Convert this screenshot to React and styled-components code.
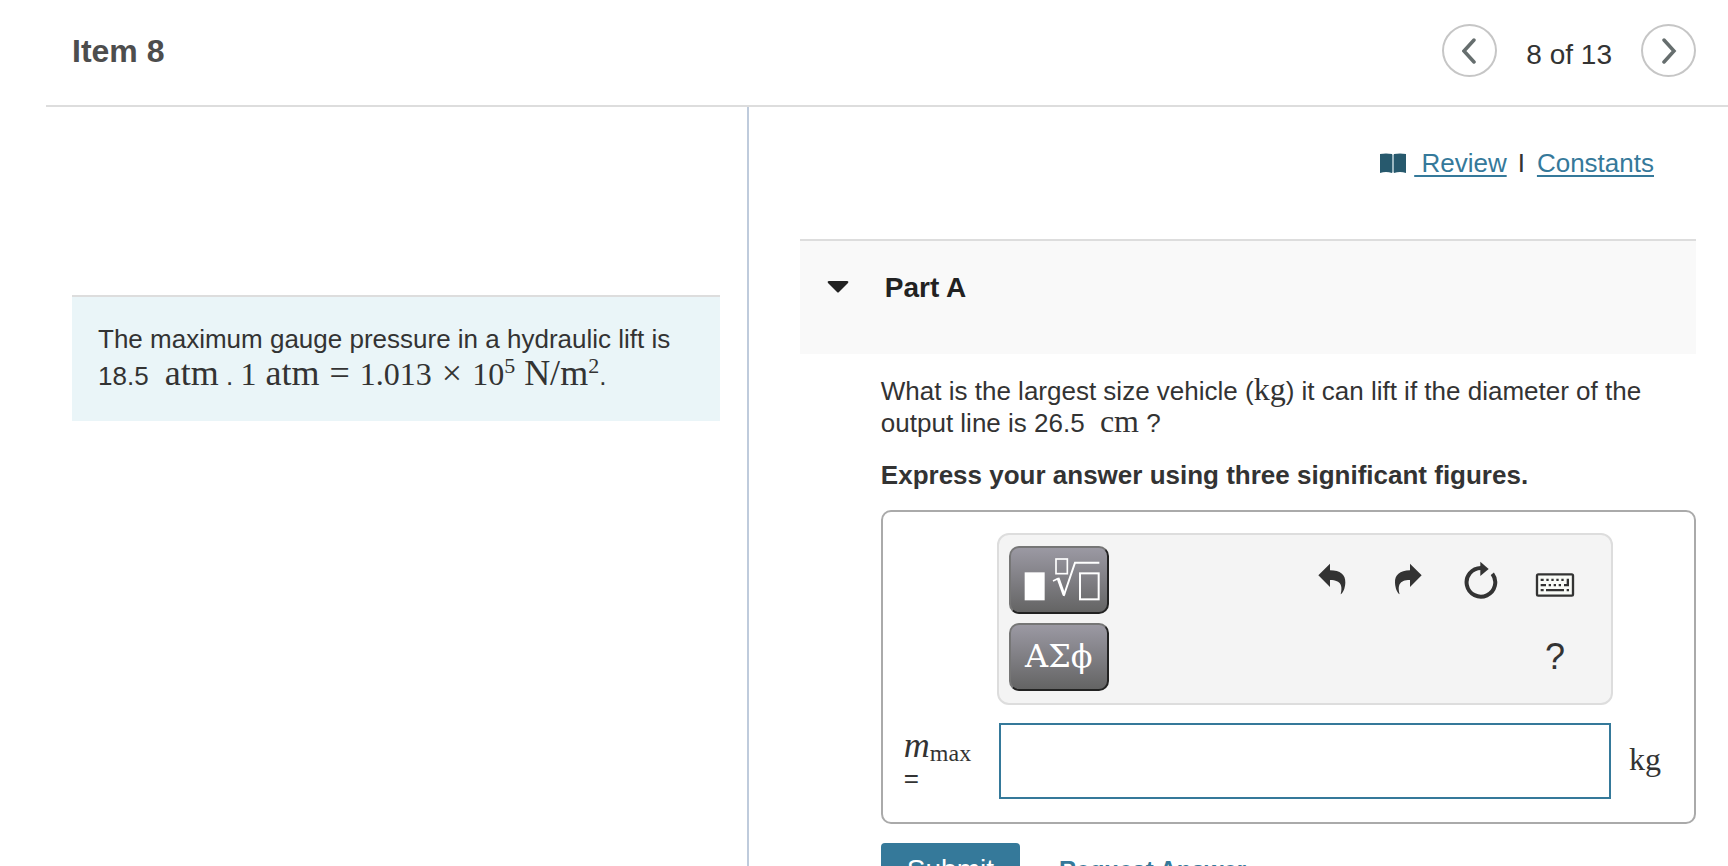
import React, { useState } from 'react';
import styled, { createGlobalStyle, ThemeProvider } from 'styled-components';

const theme = {
  colors: {
    text: '#333333',
    heading: '#4d4d4d',
    link: '#35799a',
    line: '#dddddd',
    divider: '#bfcbdc',
    intro: '#eaf5f8',
    panel: '#f9f9f9',
    toolbar: '#f4f4f4',
  },
  fonts: {
    body: '"Liberation Sans", Arial, sans-serif',
    math: '"Liberation Serif", "Times New Roman", serif',
  },
};

const GlobalStyle = createGlobalStyle`
  * {
    box-sizing: border-box;
  }
  body {
    margin: 0;
    background: #ffffff;
    color: ${({ theme }) => theme.colors.text};
    font-family: ${({ theme }) => theme.fonts.body};
    font-size: 26px;
    line-height: 32px;
  }
`;

const Page = styled.div`
  display: flex;
  flex-direction: column;
  height: 100vh;
  margin-left: 46px;
  overflow: hidden;
`;

const Header = styled.header`
  display: flex;
  justify-content: space-between;
  align-items: center;
  padding: 24px 32px 28px 26px;
  border-bottom: 2px solid ${({ theme }) => theme.colors.line};
`;

const Title = styled.h1`
  margin: 0;
  font-size: 32px;
  color: ${({ theme }) => theme.colors.heading};
`;

const Pager = styled.nav`
  display: flex;
  align-items: center;
  gap: 29px;
`;

const PagerText = styled.span`
  padding-top: 8px;
  font-size: 28px;
`;

const RoundButton = styled.button`
  display: flex;
  align-items: center;
  justify-content: center;
  width: 55px;
  height: 53px;
  padding: 0;
  border: 2px solid #c6c6c6;
  border-radius: 50%;
  background: #ffffff;
  color: #666e6e;
  cursor: pointer;
`;

const Columns = styled.div`
  display: grid;
  grid-template-columns: 5fr 7fr;
  flex: 1;
  min-height: 0;
`;

const IntroPane = styled.section`
  padding: 188px 27px 0 26px;
`;

const Intro = styled.div`
  padding: 24px 26px 26px;
  border-top: 2px solid ${({ theme }) => theme.colors.line};
  background: ${({ theme }) => theme.colors.intro};
  line-height: 37px;
`;

const Math = styled.span`
  font-family: ${({ theme }) => theme.fonts.math};
  font-size: 32px;
  line-height: 24px;
  white-space: nowrap;

  sup,
  sub {
    line-height: 12px;
  }
  sup {
    font-size: 22px;
    vertical-align: 12px;
  }
  sub {
    font-size: 24px;
    vertical-align: -4px;
  }
`;

const Variable = styled.i`
  font-size: 36px;
`;

const Operator = styled.span`
  margin: 0 10px;
  font-size: 36px;
`;

const Unit = styled.span`
  margin-left: ${({ $wide }) => ($wide ? 9 : 8)}px;
  font-size: ${({ $wide }) => ($wide ? 36 : 32)}px;
`;

const WorkPane = styled.main`
  padding: 40px 32px 0 51px;
  border-left: 2px solid ${({ theme }) => theme.colors.divider};
`;

const Resources = styled.div`
  display: flex;
  justify-content: flex-end;
  align-items: center;
  padding-right: 42px;
  margin-bottom: 60px;
`;

const Link = styled.a`
  color: ${({ theme }) => theme.colors.link};
  text-decoration: underline;
  text-underline-offset: 3px;
  text-decoration-thickness: 2px;
`;

const BookIcon = styled.svg`
  margin-right: 8px;
`;

const Separator = styled.span`
  margin: 0 12px 0 11px;
`;

const PartHeader = styled.button`
  display: flex;
  align-items: flex-start;
  gap: 36px;
  width: 100%;
  height: 115px;
  padding: 31px 27px;
  border: 0;
  border-top: 2px solid ${({ theme }) => theme.colors.line};
  background: ${({ theme }) => theme.colors.panel};
  color: #222222;
  font: bold 28px/32px ${({ theme }) => theme.fonts.body};
  text-align: left;
  cursor: pointer;

  svg {
    margin-top: 8px;
  }
`;

const PartBody = styled.div`
  padding: 21px 0 0 81px;
`;

const Question = styled.p`
  margin: 0 0 20px;
`;

const Instruction = styled.p`
  margin: 0 0 19px;
  font-weight: bold;
`;

const AnswerBox = styled.div`
  display: grid;
  grid-template-columns: 93px 1fr 65px;
  row-gap: 18px;
  padding: 21px 16px 23px 21px;
  border: 2px solid #aaaaaa;
  border-radius: 10px;
`;

const Toolbar = styled.div`
  grid-column: 2;
  display: flex;
  justify-content: space-between;
  padding: 11px 19px 12px 10px;
  border: 2px solid #dddddd;
  border-radius: 12px;
  background: ${({ theme }) => theme.colors.toolbar};
`;

const Palettes = styled.div`
  display: grid;
  gap: 9px;
`;

const PaletteButton = styled.button`
  display: flex;
  align-items: center;
  justify-content: center;
  width: 100px;
  height: 68px;
  padding: 0 0 2px;
  border: 2px solid;
  border-color: #767676 #222222 #222222 #767676;
  border-radius: 10px;
  background: linear-gradient(#9b99a3, #646464);
  color: #ffffff;
  font-family: "DejaVu Serif", serif;
  font-size: 32px;
  cursor: pointer;
`;

const Tools = styled.div`
  display: grid;
  grid-template-columns: repeat(4, 74px);
  row-gap: 9px;
`;

const ToolButton = styled.button`
  display: flex;
  align-items: center;
  justify-content: center;
  height: 68px;
  padding: 0;
  border: 0;
  background: none;
  color: #333333;
  font-family: ${({ theme }) => theme.fonts.body};
  font-size: 36px;
  cursor: pointer;
`;

const HelpButton = styled(ToolButton)`
  grid-column: 4;
`;

const AnswerLabel = styled.label`
  grid-column: 1;
  display: flex;
  flex-direction: column;
  justify-content: center;
  gap: 3px;
  padding-top: 4px;
`;

const AnswerInput = styled.input`
  height: 76px;
  min-width: 0;
  margin: 0 2px;
  padding: 0 16px;
  border: 2px solid ${({ theme }) => theme.colors.link};
  background: #ffffff;
  color: inherit;
  font: inherit;
  outline: none;
`;

const AnswerUnit = styled.div`
  align-self: center;
  padding-left: 16px;
`;

const Actions = styled.div`
  display: flex;
  align-items: center;
  gap: 39px;
  margin-top: 19px;
`;

const SubmitButton = styled.button`
  padding: 11px 26px;
  border: 0;
  border-radius: 4px;
  background: ${({ theme }) => theme.colors.link};
  color: #ffffff;
  font: 28px/32px ${({ theme }) => theme.fonts.body};
  cursor: pointer;
`;

const RequestLink = styled.a`
  color: ${({ theme }) => theme.colors.link};
  font-size: 24px;
  font-weight: bold;
  text-decoration: none;
`;

const Chevron = ({ points }) => (
  <svg width="16" height="26" viewBox="0 0 16 26" fill="none" stroke="currentColor" strokeWidth="3.500" strokeLinecap="round">
    <polyline points={points} />
  </svg>
);

const Book = () => (
  <BookIcon width="26" height="20" viewBox="0 0 26 20" aria-hidden="true">
    <path d="M0 1Q6 0 12 1V20Q6 18 0 20Z" fill="#27596d" />
    <path d="M26 1Q20 0 14 1V20Q20 18 26 20Z" fill="#27596d" />
    <path d="M12 1L13 2L14 1V19L13 20L12 19Z" fill="#9db8c2" />
  </BookIcon>
);

const TemplateIcon = () => (
  <svg width="84" height="50" viewBox="471 192 252 150" fill="none" stroke="#fff">
    <rect x="494" y="247" width="60" height="84" fill="#fff" stroke="none" />
    <rect x="588" y="207" width="34" height="44" strokeWidth="5" />
    <path d="M579 273L596 265" strokeWidth="5" />
    <path d="M594 264L612 314" strokeWidth="9" />
    <path d="M611 318L645 218H718" strokeWidth="6" />
    <rect x="660" y="250" width="56" height="78" strokeWidth="6" />
  </svg>
);

const UndoIcon = () => (
  <svg width="30" height="36" viewBox="113 218 90 108" fill="currentColor">
    <path d="M114 258L149 223V243C180 243 196 256 195 280C194 298 188 310 181 315C187 292 184 272 149 272V293Z" />
  </svg>
);

const RedoIcon = () => (
  <svg width="30" height="36" viewBox="337 218 90 108" fill="currentColor">
    <path d="M426 258L391 223V243C360 243 345 258 346 280C347 298 353 310 360 315C354 290 357 272 391 272V293Z" />
  </svg>
);

const ResetIcon = () => (
  <svg width="34" height="38" viewBox="552 213 102 114">
    <path d="M637 251A43 43 0 1 1 603 234" fill="none" stroke="currentColor" strokeWidth="12" />
    <path d="M601 215L626 237L601 258Z" fill="currentColor" />
  </svg>
);

const KeyboardIcon = () => (
  <svg width="40" height="36" viewBox="765 216 120 108" fill="currentColor">
    <rect x="771" y="253" width="108" height="64" rx="4" fill="#f9fbf7" stroke="currentColor" strokeWidth="7" />
    <path d="M782 266h9v7h-9zM799 266h7v7h-7zM814 266h7v7h-7zM829 266h7v7h-7zM844 266h7v7h-7z" />
    <path d="M860 266h7v23h-15v-7h8zM782 282h16v7h-16zM806 282h7v7h-7zM821 282h7v7h-7zM836 282h7v7h-7z" />
    <path d="M782 297h9v7h-9zM798 297h54v7h-54zM860 297h7v7h-7z" />
  </svg>
);

const App = () => {
  const [answer, setAnswer] = useState('');
  const [isOpen, setIsOpen] = useState(true);

  return (
    <ThemeProvider theme={theme}>
      <GlobalStyle />
      <Page>
        <Header>
          <Title>Item 8</Title>
          <Pager>
            <RoundButton aria-label="Previous item"><Chevron points="12,2 2,13 12,24" /></RoundButton>
            <PagerText>8 of 13</PagerText>
            <RoundButton aria-label="Next item"><Chevron points="3,2 13,13 3,24" /></RoundButton>
          </Pager>
        </Header>
        <Columns>
          <IntroPane>
            <Intro>
              The maximum gauge pressure in a hydraulic lift is 18.5{' '}
              <Math><Unit $wide>atm</Unit></Math> .{' '}
              <Math>
                1<Unit $wide>atm</Unit><Operator>=</Operator>1.013<Operator>×</Operator>10<sup>5</sup>
                <Unit $wide>N/m</Unit><sup>2</sup>
              </Math>.
            </Intro>
          </IntroPane>
          <WorkPane>
            <Resources>
              <Book />
              <Link href="#review">&nbsp;Review</Link>
              <Separator>I</Separator>
              <Link href="#constants">Constants</Link>
            </Resources>
            <PartHeader aria-expanded={isOpen} onClick={() => setIsOpen(!isOpen)}>
              <svg width="22" height="13" viewBox="0 0 22 13" fill="currentColor" aria-hidden="true">
                <path d="M2 1H20Q22 1 21 3L12 12Q11 13 10 12L1 3Q0 1 2 1Z" />
              </svg>
              Part A
            </PartHeader>
            {isOpen && (
              <PartBody>
                <Question>
                  What is the largest size vehicle (<Math>kg</Math>) it can lift if the diameter of the
                  output line is 26.5 <Math><Unit>cm</Unit></Math> ?
                </Question>
                <Instruction>Express your answer using three significant figures.</Instruction>
                <AnswerBox>
                  <Toolbar>
                    <Palettes>
                      <PaletteButton aria-label="Templates"><TemplateIcon /></PaletteButton>
                      <PaletteButton>ΑΣϕ</PaletteButton>
                    </Palettes>
                    <Tools>
                      <ToolButton aria-label="Undo"><UndoIcon /></ToolButton>
                      <ToolButton aria-label="Redo"><RedoIcon /></ToolButton>
                      <ToolButton aria-label="Reset"><ResetIcon /></ToolButton>
                      <ToolButton aria-label="Keyboard shortcuts"><KeyboardIcon /></ToolButton>
                      <HelpButton>?</HelpButton>
                    </Tools>
                  </Toolbar>
                  <AnswerLabel htmlFor="answer">
                    <Math><Variable>m</Variable><sub>max</sub></Math>
                    <span>=</span>
                  </AnswerLabel>
                  <AnswerInput id="answer" value={answer} onChange={(e) => setAnswer(e.target.value)} />
                  <AnswerUnit><Math>kg</Math></AnswerUnit>
                </AnswerBox>
                <Actions>
                  <SubmitButton>Submit</SubmitButton>
                  <RequestLink href="#request">Request Answer</RequestLink>
                </Actions>
              </PartBody>
            )}
          </WorkPane>
        </Columns>
      </Page>
    </ThemeProvider>
  );
};

export default App;
